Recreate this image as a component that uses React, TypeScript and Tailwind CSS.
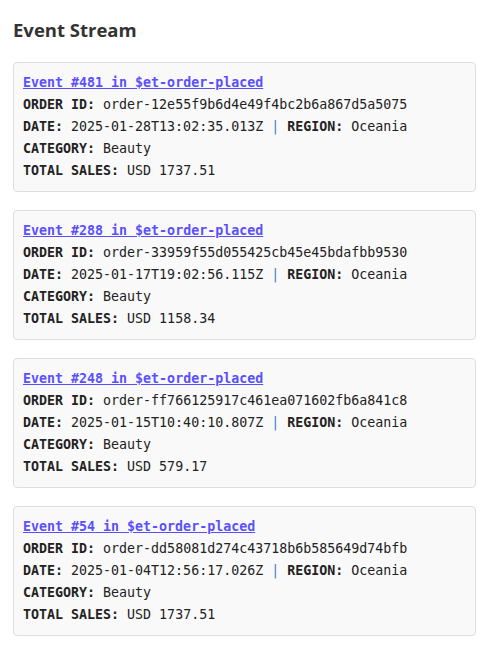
const events = [
  {
    id: 481,
    orderId: "order-12e55f9b6d4e49f4bc2b6a867d5a5075",
    date: "2025-01-28T13:02:35.013Z",
    region: "Oceania",
    category: "Beauty",
    total: "USD 1737.51",
  },
  {
    id: 288,
    orderId: "order-33959f55d055425cb45e45bdafbb9530",
    date: "2025-01-17T19:02:56.115Z",
    region: "Oceania",
    category: "Beauty",
    total: "USD 1158.34",
  },
  {
    id: 248,
    orderId: "order-ff766125917c461ea071602fb6a841c8",
    date: "2025-01-15T10:40:10.807Z",
    region: "Oceania",
    category: "Beauty",
    total: "USD 579.17",
  },
  {
    id: 54,
    orderId: "order-dd58081d274c43718b6b585649d74bfb",
    date: "2025-01-04T12:56:17.026Z",
    region: "Oceania",
    category: "Beauty",
    total: "USD 1737.51",
  },
];

export default function App() {
  return (
    <div className="min-h-screen bg-white pl-[13px] pr-[9px] pt-[16px] text-[#333] [font-family:'Open_Sans','Noto_Sans',sans-serif]">
      <h2 className="mb-[18px] text-[18.5px] font-bold leading-[28px]">Event Stream</h2>
      <div className="flex flex-col gap-[18px] [font-family:'DejaVu_Sans_Mono',monospace] text-[13.3px] leading-[22px] text-[#222]">
        {events.map((e) => (
          <div key={e.id} className="rounded border border-[#ddd] bg-[#f9f9f9] px-[9px] py-[9px]">
            <div>
              <a href="#" className="font-bold text-[#5a4fff] underline">
                Event #{e.id} in $et-order-placed
              </a>
            </div>
            <div>
              <b>ORDER ID:</b> {e.orderId}
            </div>
            <div>
              <b>DATE:</b> {e.date} <span className="text-[#3b7fd0]">|</span> <b>REGION:</b> {e.region}
            </div>
            <div>
              <b>CATEGORY:</b> {e.category}
            </div>
            <div>
              <b>TOTAL SALES:</b> {e.total}
            </div>
          </div>
        ))}
      </div>
    </div>
  );
}
